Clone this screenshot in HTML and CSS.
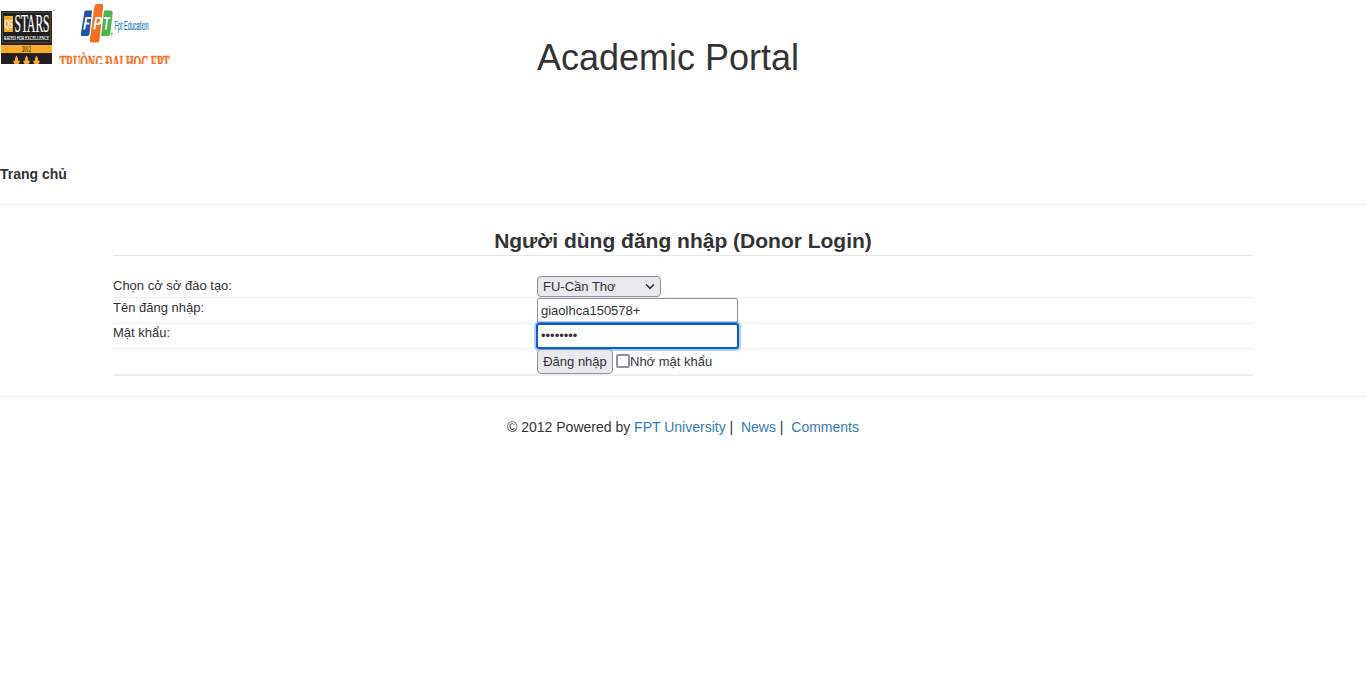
FILE: index.html
```
<!DOCTYPE html>
<html lang="vi">
<head>
<meta charset="utf-8">
<title>Academic Portal</title>
<link rel="stylesheet" href="styles.css">
</head>
<body>
<header class="header">
  <div class="brand">
    <svg class="logo" width="170" height="64" viewBox="0 0 170 64">
      <rect x="1" y="11" width="51" height="53" fill="#211f20"/>
      <rect x="2.500" y="12.500" width="48" height="30" fill="none" stroke="#777" stroke-width=".5"/>
      <rect x="4" y="16" width="9" height="16" fill="#f7a823"/>
      <text class="serif" transform="translate(4.500 28) scale(1 1.300)" font-size="9" fill="#fff" stroke="#fff" stroke-width=".2" textLength="8" lengthAdjust="spacingAndGlyphs">QS</text>
      <text class="serif" transform="translate(14.500 31.500) scale(1 1.550)" font-size="16" fill="#fff" stroke="#fff" stroke-width=".15" textLength="35" lengthAdjust="spacingAndGlyphs">STARS</text>
      <text class="serif" x="4" y="39.500" font-size="7" fill="#fff" stroke="#fff" stroke-width=".15" textLength="45" lengthAdjust="spacingAndGlyphs">RATED FOR EXCELLENCE</text>
      <rect x="1" y="44" width="51" height="9" fill="#f9ac2b"/>
      <path d="M1 44.500H52M1 53.500H52" stroke="#332a1b" stroke-width="1"/>
      <text class="serif" x="22" y="51.700" font-size="9" fill="#3a2c14" stroke="#3a2c14" stroke-width=".15" textLength="9" lengthAdjust="spacingAndGlyphs">2012</text>
      <path id="flame" d="M16.500 55.500Q18.500 58 18 60.500L20 61L18.500 64H14.500L13 61L15 60.500Q14.500 58 16.500 55.500Z" fill="#f9ac2b"/>
      <use href="#flame" x="10"/>
      <use href="#flame" x="20"/>
      <circle cx="53.800" cy="10.500" r=".7" fill="#888"/>
      <path d="M84.500 11.500Q85 10.500 86.500 10.500H92L89.500 34Q89.200 36 87.500 36H82Q80.500 36 80.800 34Z" fill="#1d57a5"/>
      <path d="M94.500 6Q95 4 97 4H101.500Q103.500 4 103.200 6L99.500 40Q99.200 42.500 97 42.500H91.500Q89.500 42.500 89.800 40Z" fill="#f36f21"/>
      <path d="M104 10.500H110.500Q113 10.500 112.700 13L110.300 33.500Q110 36 108 36H101.200Z" fill="#4bb748"/>
      <path d="M84.200 29.500L86.300 18H90.800M85.500 23.500H89.300M94.300 29.500L96 18H99.500Q101.800 18 101.200 20.500Q100.700 24 98 24H95.200M103.800 18H110.300M107.300 18L105.800 29.500" fill="none" stroke="#fff" stroke-width="1.900"/>
      <circle cx="111.800" cy="33.800" r="1" fill="#4bb748"/>
      <text class="sans" transform="translate(114.500 29.800) scale(1 1.600)" font-size="7.500" fill="#1676b8" stroke="#1676b8" stroke-width=".1" textLength="34" lengthAdjust="spacingAndGlyphs">Fpt Education</text>
      <text class="serif heavy" transform="translate(59.500 69) scale(1 1.400)" font-size="14" fill="#f36f21" stroke="#f36f21" stroke-width=".3" textLength="110" lengthAdjust="spacingAndGlyphs">TRUÒNG ĐẠI HỌC FPT</text>
    </svg>
  </div>
  <h1 class="title">Academic Portal</h1>
</header>
<nav class="crumb">Trang chủ</nav>
<main class="container">
  <h2 class="legend">Người dùng đăng nhập (Donor Login)</h2>
  <form class="form">
    <div class="row row-campus">
      <span class="label">Chọn cở sở đào tạo:</span>
      <div class="select"><span>FU-Cần Thơ</span>
        <svg width="10" height="7" viewBox="0 0 10 7"><path d="M1.200 1.500L5 5.300L8.800 1.500" fill="none" stroke="#333" stroke-width="1.600"/></svg>
      </div>
    </div>
    <div class="row row-user">
      <label class="label" for="user">Tên đăng nhập:</label>
      <input class="field" id="user" type="text" value="giaolhca150578+">
    </div>
    <div class="row row-pass">
      <span class="label">Mật khẩu:</span>
      <div class="field active">••••••••</div>
    </div>
    <div class="row row-submit">
      <span class="label"></span>
      <button class="button" type="button">Đăng nhập</button>
      <span class="check"></span><span class="remember">Nhớ mật khẩu</span>
    </div>
  </form>
</main>
<footer class="footer">© 2012 Powered by <a class="link">FPT University</a> |&nbsp; <a class="link">News</a> |&nbsp; <a class="link">Comments</a></footer>
</body>
</html>
```
FILE: styles.css
```
* { box-sizing: border-box; }
body { margin: 0; background: #fff; color: #333; font: 14px/20px "Liberation Sans", Arial, sans-serif; }
.header { display: flex; height: 164px; }
.brand { width: 537px; }
.logo { display: block; overflow: hidden; }
.serif { font-family: "Liberation Serif", serif; }
.sans { font-family: "Liberation Sans", sans-serif; }
.heavy { font-weight: bold; }
.title { margin: 38px 0 0; font-size: 36px; line-height: 40px; font-weight: 400; }
.crumb { height: 41px; border-bottom: 1px solid #eee; font-weight: 700; }
.container { width: 1140px; margin: 0 auto; padding-top: 20px; height: 191px; }
.legend { margin: 0 0 20px; height: 31px; border-bottom: 1px solid #e5e5e5; font-size: 21px; line-height: 31px; font-weight: 700; text-align: center; }
.form { font-size: 13px; line-height: 18px; border-bottom: 1px solid #eee; }
.row { display: flex; align-items: flex-start; border-bottom: 1px solid #eee; }
.row-campus { height: 22px; }
.row-user { height: 26px; }
.row-pass { height: 25px; }
.row-submit { height: 26px; }
.label { width: 424px; flex: none; padding-top: 1px; }
.row-pass .label { padding-top: 0; }
.select { display: flex; justify-content: space-between; align-items: center; width: 124px; height: 21px; padding: 0 5px; border: 1px solid #8f8f9d; border-radius: 4px; background: #e9e9ed; }
.field { width: 201px; height: 25px; margin: 0; padding: 0 3px; border: 1px solid #8f8f9d; border-radius: 2px; background: #fff; color: #333; font: 13px/23px "Liberation Sans", Arial, sans-serif; }
.active { position: relative; height: 24px; line-height: 21px; border-color: #0060df; box-shadow: 0 0 0 1px #0060df, 0 0 0 3px rgba(0, 96, 223, .3); }
.button { position: relative; width: 76px; height: 25px; padding: 0; border: 1px solid #8f8f9d; border-radius: 4px; background: #e9e9ed; color: #333; font: 13px/23px "Liberation Sans", Arial, sans-serif; }
.check { width: 14px; height: 14px; margin: 5px 0 0 3px; border: 2px solid #8f8f9d; border-radius: 2px; background: #fff; }
.remember { padding-top: 4px; }
.footer { border-top: 1px solid #eee; padding-top: 20px; text-align: center; }
.link { color: #337ab7; }
```
